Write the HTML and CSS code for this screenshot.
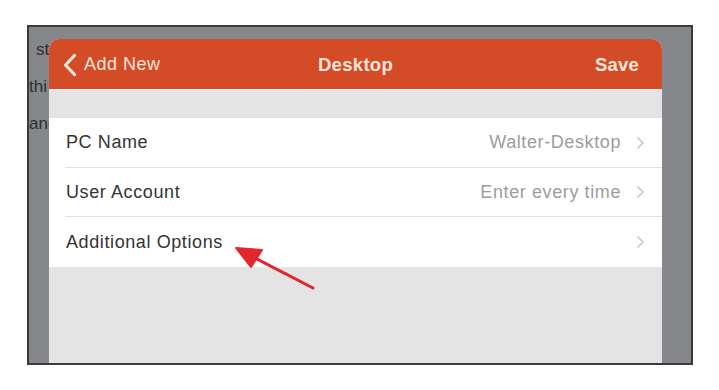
FILE: index.html
```html
<!DOCTYPE html>
<html lang="en">
    <head>
        <meta charset="UTF-8">
        <meta name="viewport" content="width=device-width, initial-scale=1.0">
        <title>Desktop</title>
        <link rel="stylesheet" href="styles.css">
    </head>
    <body>
        <div id="frame">
            <div class="behind">
                <p class="first">st</p>
                <p>thi</p>
                <p>anc</p>
            </div>
            <div id="sheet">
                <div class="nav">
                    <div class="nav_left">
                        <svg class="back" width="15" height="24" viewBox="0 0 15 24">
                            <path d="M12.5 2.5 L3.5 12 L12.5 21.5" fill="none" stroke="#fde6dc" stroke-width="3.2" stroke-linecap="round" stroke-linejoin="round"/>
                        </svg>
                        <span>Add New</span>
                    </div>
                    <div class="nav_title">Desktop</div>
                    <div class="nav_right">Save</div>
                </div>
                <div class="band"></div>
                <ul class="list">
                    <li>
                        <span class="label">PC Name</span>
                        <span class="value">Walter-Desktop</span>
                        <svg class="chev" width="9" height="14" viewBox="0 0 9 14"><path d="M1.5 1.5 L7 7 L1.5 12.5" fill="none" stroke="#c5c5ca" stroke-width="1.5"/></svg>
                    </li>
                    <li>
                        <span class="label">User Account</span>
                        <span class="value">Enter every time</span>
                        <svg class="chev" width="9" height="14" viewBox="0 0 9 14"><path d="M1.5 1.5 L7 7 L1.5 12.5" fill="none" stroke="#c5c5ca" stroke-width="1.5"/></svg>
                    </li>
                    <li>
                        <span class="label">Additional Options</span>
                        <span class="value"></span>
                        <svg class="chev" width="9" height="14" viewBox="0 0 9 14"><path d="M1.5 1.5 L7 7 L1.5 12.5" fill="none" stroke="#c5c5ca" stroke-width="1.5"/></svg>
                    </li>
                </ul>
            </div>
            <!-- red pointer drawn over the sheet -->
            <svg class="pointer" width="663" height="336" viewBox="0 0 663 336">
                <line x1="284" y1="261" x2="222" y2="229" stroke="#e3262b" stroke-width="3" stroke-linecap="round"/>
                <polygon points="207,221 233,223 222,240" fill="#e3262b" stroke="#e3262b" stroke-width="2" stroke-linejoin="round"/>
            </svg>
        </div>
    </body>
</html>
```

FILE: styles.css
```css
*{
    box-sizing: border-box;
}
body{
    margin: 0;
    background: #fff;
    font-family: "Liberation Sans", Arial, sans-serif;
}
#frame{
    position: relative;
    margin: 25px 0 0 27px;
    width: 666px;
    height: 340px;
    border: 2px solid #3b3b3d;
    background: #86878a;
    display: grid;
    overflow: hidden;
}
.behind{
    grid-area: 1 / 1;
    width: 22px;
    overflow: hidden;
    padding-top: 4px;
    font-size: 17px;
    line-height: 37px;
    color: #2e2e30;
    white-space: nowrap;
}
.behind p{
    margin: 0;
    height: 37px;
}
.behind .first{
    padding-left: 7px;
}
#sheet{
    grid-area: 1 / 1;
    margin: 12px 29px 0 20px;
    background: #e4e4e4;
    border-radius: 11px 11px 0 0;
    overflow: hidden;
    display: flex;
    flex-direction: column;
}
.nav{
    height: 50px;
    background: #d34b27;
    color: #fde6dc;
    display: grid;
    grid-template-columns: 1fr auto 1fr;
    align-items: center;
    padding-top: 1px;
    font-size: 18px;
    letter-spacing: 0.5px;
}
.nav_left{
    display: flex;
    align-items: center;
    gap: 7px;
    padding-left: 13px;
}
.nav_title{
    font-weight: bold;
    font-size: 18.5px;
    letter-spacing: 0.3px;
}
.nav_right{
    text-align: right;
    font-weight: bold;
    font-size: 18.5px;
    letter-spacing: 0.2px;
    padding-right: 23px;
}
.band{
    height: 29px;
}
.list{
    list-style: none;
    margin: 0;
    padding: 0;
    background: #fff;
}
.list li{
    height: 49.5px;
    margin-left: 16px;
    padding: 1px 17px 0 1px;
    display: flex;
    align-items: center;
    border-bottom: 1px solid #dfdfdf;
    font-size: 18px;
    letter-spacing: 0.6px;
}
.list li:last-child{
    border-bottom: none;
}
.label{
    flex: 1;
    color: #333;
}
.value{
    color: #9c9c9c;
    margin-right: 15px;
}
.pointer{
    position: absolute;
    left: 0;
    top: 0;
}
```
